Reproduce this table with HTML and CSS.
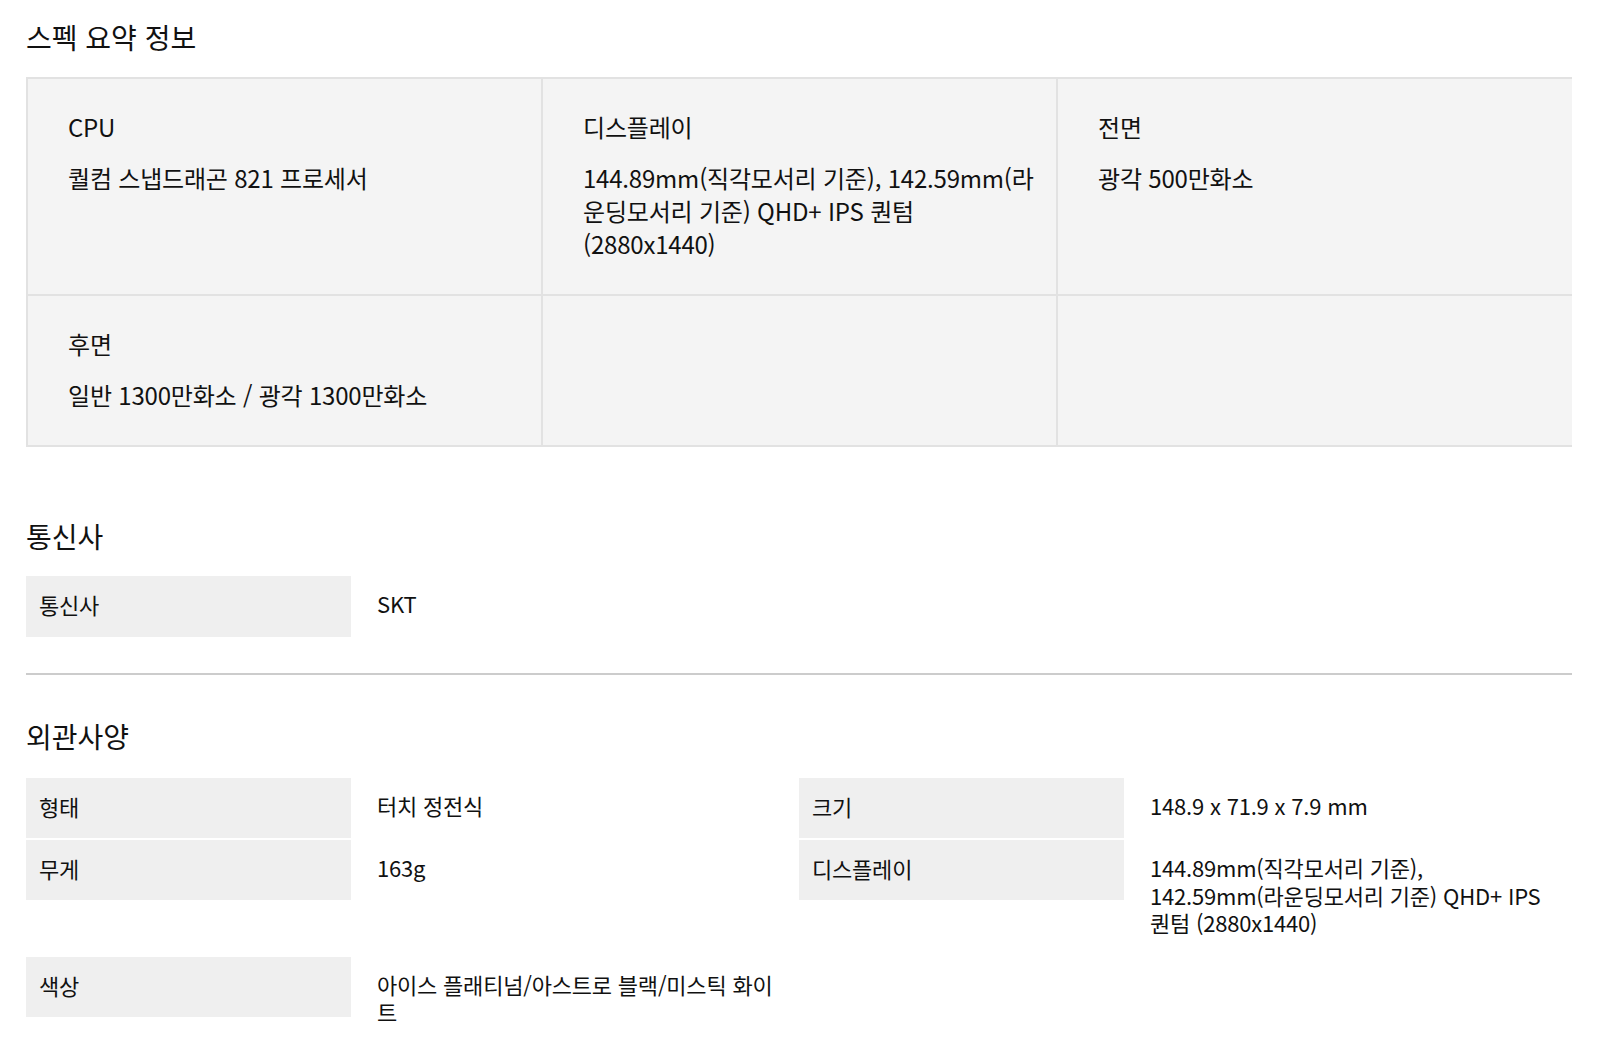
FILE: index.html
```html
<!DOCTYPE html>
<html lang="ko">
<head>
<meta charset="utf-8">
<title>스펙 정보</title>
<link rel="stylesheet" href="styles.css">
</head>
<body>
<main class="page">
  <section class="summary">
    <h2 class="sec-title">스펙 요약 정보</h2>
    <div class="sum-grid">
      <div class="sum-cell">
        <p class="sum-label">CPU</p>
        <p class="sum-value">퀄컴 스냅드래곤 821 프로세서</p>
      </div>
      <div class="sum-cell">
        <p class="sum-label">디스플레이</p>
        <p class="sum-value">144.89mm(직각모서리 기준), 142.59mm(라운딩모서리 기준) QHD+ IPS 퀀텀 (2880x1440)</p>
      </div>
      <div class="sum-cell sum-cell-last">
        <p class="sum-label">전면</p>
        <p class="sum-value">광각 500만화소</p>
      </div>
      <div class="sum-cell">
        <p class="sum-label">후면</p>
        <p class="sum-value">일반 1300만화소 / 광각 1300만화소</p>
      </div>
      <div class="sum-cell"></div>
      <div class="sum-cell sum-cell-last"></div>
    </div>
  </section>

  <section class="spec spec-carrier">
    <h2 class="sec-title">통신사</h2>
    <div class="spec-grid">
      <div class="spec-label">통신사</div>
      <div class="spec-value">SKT</div>
    </div>
  </section>

  <hr class="divider">

  <section class="spec spec-look">
    <h2 class="sec-title">외관사양</h2>
    <div class="spec-grid">
      <div class="spec-label">형태</div>
      <div class="spec-value">터치 정전식</div>
      <div class="spec-label">크기</div>
      <div class="spec-value">148.9 x 71.9 x 7.9 mm</div>

      <div class="spec-label">무게</div>
      <div class="spec-value">163g</div>
      <div class="spec-label">디스플레이</div>
      <div class="spec-value">144.89mm(직각모서리 기준), 142.59mm(라운딩모서리 기준) QHD+ IPS 퀀텀 (2880x1440)</div>

      <div class="spec-label">색상</div>
      <div class="spec-value">아이스 플래티넘/아스트로 블랙/미스틱 화이트</div>
    </div>
  </section>
</main>
</body>
</html>
```
FILE: styles.css
```css
* {
  box-sizing: border-box;
}

html, body {
  margin: 0;
  padding: 0;
  background: #fff;
}

body {
  font-family: "Noto Sans CJK KR", "Noto Sans", sans-serif;
  color: #111;
}

.page {
  width: 1546px;
  margin-left: 26px;
  padding-top: 17px;
  padding-bottom: 40px;
}

.sec-title {
  margin: 0;
  font-size: 28px;
  line-height: 40px;
  font-weight: 400;
  letter-spacing: 0;
  color: #111;
}

/* summary table */
.sum-grid {
  margin-top: 20px;
  display: grid;
  grid-template-columns: 515px 515px 1fr;
  border-top: 2px solid #e2e2e2;
  border-left: 2px solid #e2e2e2;
  background: #f4f4f4;
}

.sum-cell {
  padding: 31px 20px 34px 40px;
  border-right: 2px solid #e2e2e2;
  border-bottom: 2px solid #e2e2e2;
  font-size: 24px;
  line-height: 33px;
  letter-spacing: -0.2px;
}

.sum-cell-last {
  border-right: 0;
}

.sum-label,
.sum-value {
  margin: 0;
}

.sum-label {
  margin-bottom: 18px;
}

/* spec tables */
.spec-carrier {
  margin-top: 69px;
}

.spec-grid {
  margin-top: 20px;
  display: grid;
  grid-template-columns: 325px 448px 325px 448px;
  row-gap: 2px;
  align-items: start;
  font-size: 22px;
  letter-spacing: -0.2px;
}

.spec-look .spec-grid {
  margin-top: 22px;
}

.spec-label {
  background: #efefef;
  padding: 14px 13px 17px;
  line-height: 29px;
  height: 60px;
}

.spec-carrier .spec-label {
  height: 61px;
}

.spec-value {
  padding: 14px 20px 18px 26px;
  line-height: 27.5px;
}

.divider {
  margin: 36px 0 41px;
  border: 0;
  height: 2px;
  background: #cccccc;
}
```
